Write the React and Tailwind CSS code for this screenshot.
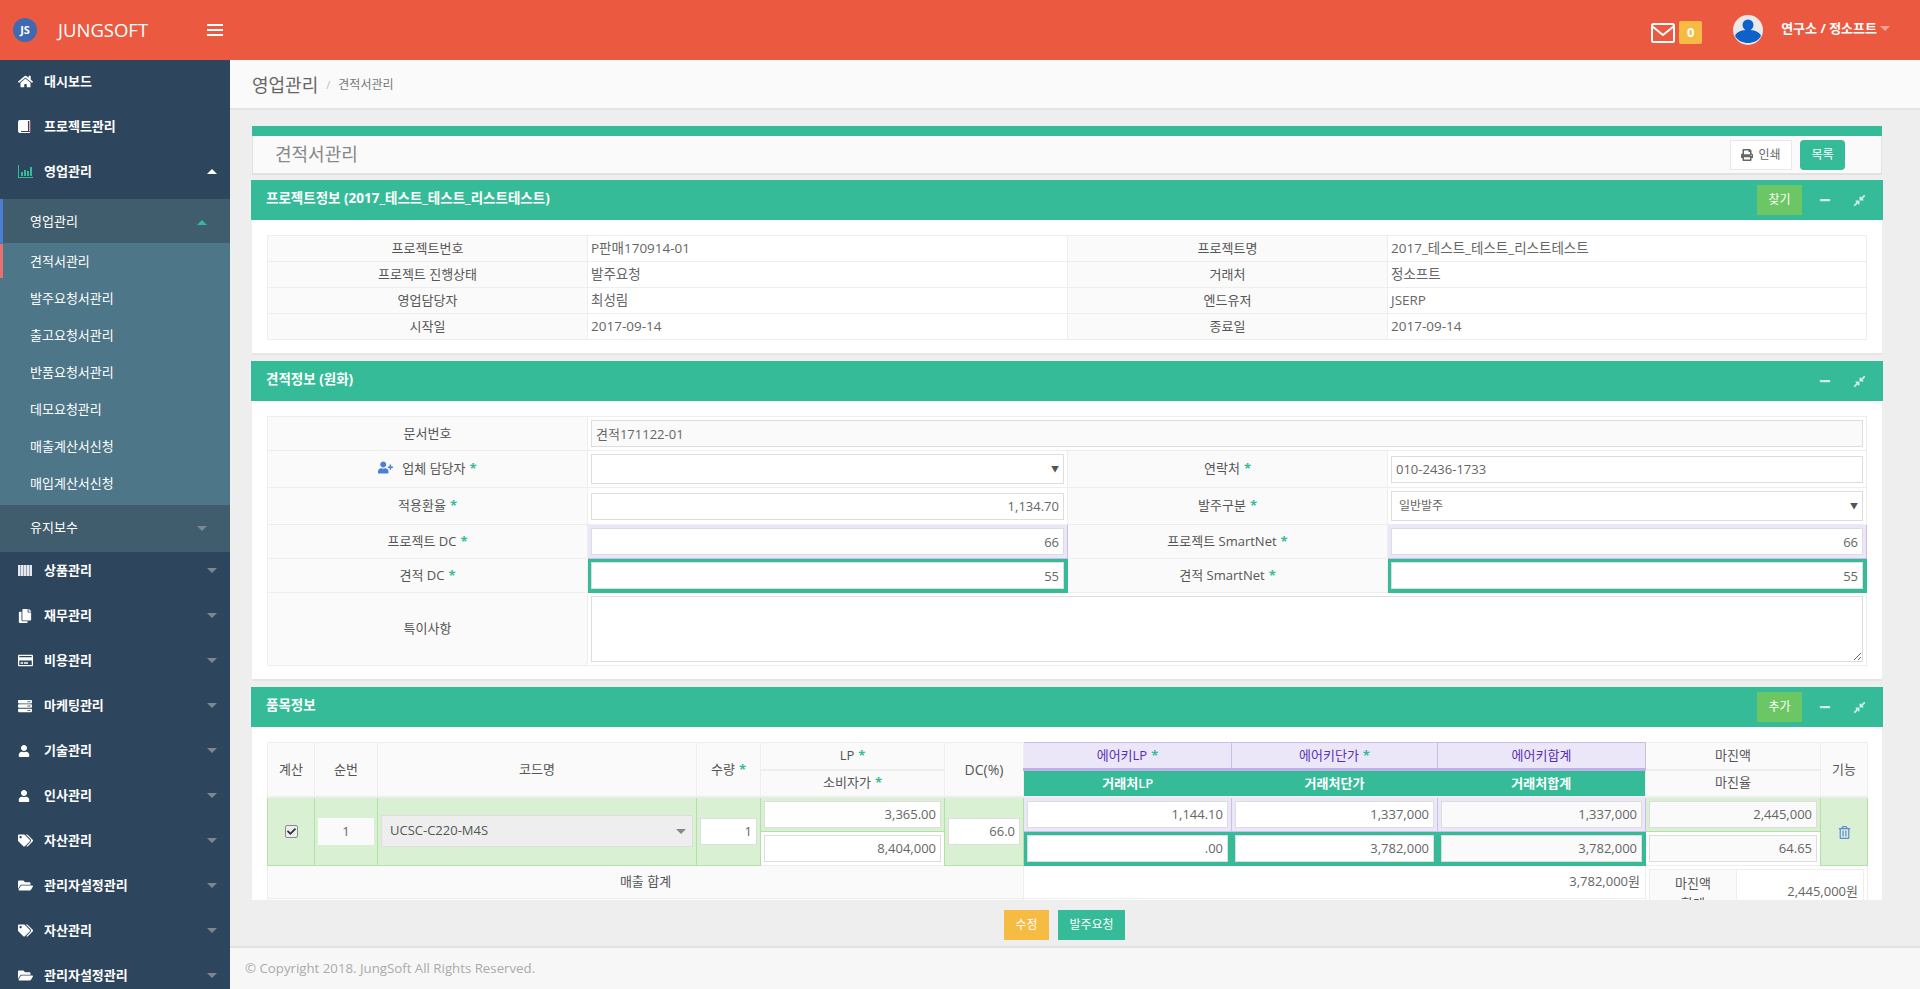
import React from 'react';
import {
  FaHome, FaCopy, FaRegCreditCard, FaServer, FaUser, FaTags, FaFolderOpen,
  FaUserPlus, FaPrint, FaMinus, FaCompressAlt, FaRegTrashAlt, FaCheck,
} from 'react-icons/fa';

const ChartIcon = () => (
  <svg width="15" height="13" viewBox="0 0 15 13" fill="#36bb98">
    <path d="M0 0h1v12h14v1H0z" />
    <path d="M3 7h2v4H3zM6 5h2v6H6zM9 6h2v5H9zM12 2h2v9h-2z" />
  </svg>
);

const BookIcon = () => (
  <svg width="13" height="13" viewBox="0 0 13 13">
    <path d="M2 0h10v11H3v1h9v1H2a2 2 0 0 1-2-2V2a2 2 0 0 1 2-2z" fill="#ffffff" />
    <path d="M10 1h1v10h-1z" fill="#2d465d" />
    <path d="M11.5 0.5h1v12h-1z" fill="#c9707c" />
  </svg>
);

const BarcodeIcon = () => (
  <svg width="14" height="11" viewBox="0 0 14 11">
    <rect width="14" height="11" fill="#e6e8ee" />
    <path d="M2 0h1v11H2zM5 0h1v11H5zM8 0h1v11H8zM11 0h1v11h-1z" fill="#9aa4b4" />
  </svg>
);

const EnvelopeIcon = () => (
  <svg width="24" height="20" viewBox="0 0 24 20" fill="none" stroke="#ffffff" strokeWidth="2">
    <rect x="1" y="1" width="22" height="18" rx="1.5" />
    <path d="M1.5 3.5 12 12l10.5-8.5" />
  </svg>
);

const Avatar = () => (
  <svg width="30" height="30" viewBox="0 0 30 30">
    <circle cx="15" cy="15" r="15" fill="#e9e9e9" />
    <circle cx="15" cy="10" r="5.5" fill="#0d62c9" />
    <path d="M2 21c2-5 7-6 13-6s11 1 13 6c-3 5-8 7-13 7S5 26 2 21z" fill="#0d62c9" />
  </svg>
);

const Caret = ({ up, color }) => (
  <span
    className={`w-0 h-0 border-x-[5px] border-x-transparent ${up ? 'border-b-[5px]' : 'border-t-[5px]'}`}
    style={up ? { borderBottomColor: color } : { borderTopColor: color }}
  />
);

const topMenu = [
  { label: '대시보드', icon: <FaHome size={15} /> },
  { label: '프로젝트관리', icon: <BookIcon /> },
];

const subMenu = ['견적서관리', '발주요청서관리', '출고요청서관리', '반품요청서관리', '데모요청관리', '매출계산서신청', '매입계산서신청'];

const bottomMenu = [
  { label: '상품관리', icon: <BarcodeIcon /> },
  { label: '재무관리', icon: <FaCopy size={14} /> },
  { label: '비용관리', icon: <FaRegCreditCard size={15} /> },
  { label: '마케팅관리', icon: <FaServer size={14} /> },
  { label: '기술관리', icon: <FaUser size={12} /> },
  { label: '인사관리', icon: <FaUser size={12} /> },
  { label: '자산관리', icon: <FaTags size={15} /> },
  { label: '관리자설정관리', icon: <FaFolderOpen size={15} /> },
  { label: '자산관리', icon: <FaTags size={15} /> },
  { label: '관리자설정관리', icon: <FaFolderOpen size={15} /> },
];

function MenuItem({ item, open }) {
  return (
    <div className="h-[45px] shrink-0 pb-[2px] pl-[18px] pr-[13px] flex items-center text-white font-bold text-[13px]">
      <span className="w-[26px] flex items-center">{item.icon}</span>
      <span className="flex-1">{item.label}</span>
      {item.caret !== false && <Caret up={open} color={open ? '#ffffff' : '#7d8791'} />}
    </div>
  );
}

function Sidebar() {
  return (
    <aside className="w-[230px] shrink-0 bg-[#2d465d] overflow-hidden flex flex-col">
      {topMenu.map((item) => (
        <MenuItem key={item.label} item={{ ...item, caret: false }} />
      ))}
      <MenuItem item={{ label: '영업관리', icon: <ChartIcon /> }} open />
      <div className="mt-[4px] h-[44px] shrink-0 bg-[#3f5d6d] border-l-[3px] border-l-[#4a7fd6] pt-[2px] pl-[27px] pr-[23px] flex items-center justify-between text-white text-[13px]">
        <span>영업관리</span>
        <Caret up color="#36bb98" />
      </div>
      <div className="bg-[#4d7689] pb-[3px] shrink-0">
        {subMenu.map((label, i) => (
          <div
            key={label}
            className={`h-[37px] flex items-center pl-[30px] text-white text-[13px] ${i === 0 ? 'relative' : ''}`}
          >
            {i === 0 && <span className="absolute left-0 top-[1px] bottom-[2px] w-[3px] bg-[#e8716f]" />}
            {label}
          </div>
        ))}
      </div>
      <div className="h-[47px] shrink-0 bg-[#3f5d6d] pb-[1px] pl-[30px] pr-[23px] flex items-center justify-between text-white text-[13px]">
        <span>유지보수</span>
        <Caret color="#7d8791" />
      </div>
      <div className="-mt-[3px] flex flex-col">
        {bottomMenu.map((item, i) => (
          <MenuItem key={i} item={item} />
        ))}
      </div>
    </aside>
  );
}

function Star() {
  return <span className="text-[#36bb98] font-bold ml-[4px]">*</span>;
}

function Field({ value = '', right, bg = 'bg-white', className = '' }) {
  return (
    <input
      readOnly
      value={value}
      className={`block w-full h-[27px] border border-[#dddddd] px-[4px] text-[13px] text-[#666] outline-none ${right ? 'text-right' : ''} ${bg} ${className}`}
    />
  );
}

function FakeSelect({ value }) {
  return (
    <div className="h-[30px] bg-white border border-[#dddddd] pl-[7px] pr-[4px] flex items-center justify-between text-[12px] text-[#666]">
      <span>{value}</span>
      <span className="text-[8px] text-[#555]">▼</span>
    </div>
  );
}

function Panel({ title, action, children, first }) {
  return (
    <section className={first ? 'mt-[5px]' : 'mt-[6px]'}>
      <div className="h-10 bg-[#36bb98] flex items-center pl-[15px] pr-[17px] text-white">
        <h2 className="flex-1 font-bold text-[13.5px] pb-[4px]">{title}</h2>
        {action && (
          <button className="h-[30px] w-[45px] bg-[#6dc664] text-[12px] text-white mr-[17px]">{action}</button>
        )}
        <FaMinus size={12} className="text-[#cfeee5]" />
        <FaCompressAlt size={13} className="text-[#cfeee5] ml-[22px]" />
      </div>
      <div className="mx-px bg-white border-b-2 border-[#e5e5e5] px-[15px] pt-[15px] pb-[13px]">{children}</div>
    </section>
  );
}

const labelCell = 'bg-[#fafafa] border border-[#eeeeee] text-center text-[13px] text-[#555] font-normal';
const valueCell = 'border border-[#eeeeee] text-[13.5px] text-[#666] px-[3px]';

function ProjectTable() {
  const rows = [
    ['프로젝트번호', 'P판매170914-01', '프로젝트명', '2017_테스트_테스트_리스트테스트'],
    ['프로젝트 진행상태', '발주요청', '거래처', '정소프트'],
    ['영업담당자', '최성림', '엔드유저', 'JSERP'],
    ['시작일', '2017-09-14', '종료일', '2017-09-14'],
  ];
  return (
    <table className="w-full table-fixed border-collapse">
      <colgroup>
        <col className="w-[320px]" />
        <col className="w-[480px]" />
        <col className="w-[320px]" />
        <col />
      </colgroup>
      <tbody>
        {rows.map((r) => (
          <tr key={r[0]} className="h-[26px]">
            <th className={labelCell}>{r[0]}</th>
            <td className={valueCell}>{r[1]}</td>
            <th className={labelCell}>{r[2]}</th>
            <td className={valueCell}>{r[3]}</td>
          </tr>
        ))}
      </tbody>
    </table>
  );
}

const purpleCell = 'bg-[#ebe7f8] border border-[#c9bfe8] p-[3px]';
const tealCell = 'bg-[#36bb98] border border-[#36bb98] p-[3px]';

function QuoteTable() {
  return (
    <table className="w-full table-fixed border-collapse">
      <colgroup>
        <col className="w-[320px]" />
        <col className="w-[480px]" />
        <col className="w-[320px]" />
        <col />
      </colgroup>
      <tbody>
        <tr className="h-[34px]">
          <th className={labelCell}>문서번호</th>
          <td colSpan={3} className={valueCell}>
            <Field value="견적171122-01" bg="bg-[#fafafa]" />
          </td>
        </tr>
        <tr className="h-[37px]">
          <th className={labelCell}>
            <FaUserPlus size={15} className="inline text-[#4a7fd6] mr-[9px] align-[-2px]" />
            업체 담당자<Star />
          </th>
          <td className={valueCell}>
            <FakeSelect value="" />
          </td>
          <th className={labelCell}>
            연락처<Star />
          </th>
          <td className={valueCell}>
            <Field value="010-2436-1733" />
          </td>
        </tr>
        <tr className="h-[37px]">
          <th className={labelCell}>
            적용환율<Star />
          </th>
          <td className={valueCell}>
            <Field value="1,134.70" right />
          </td>
          <th className={labelCell}>
            발주구분<Star />
          </th>
          <td className={valueCell}>
            <FakeSelect value="일반발주" />
          </td>
        </tr>
        <tr className="h-[34px]">
          <th className={labelCell}>
            프로젝트 DC<Star />
          </th>
          <td className={purpleCell}>
            <Field value="66" right />
          </td>
          <th className={labelCell}>
            프로젝트 SmartNet<Star />
          </th>
          <td className={purpleCell}>
            <Field value="66" right />
          </td>
        </tr>
        <tr className="h-[34px]">
          <th className={labelCell}>
            견적 DC<Star />
          </th>
          <td className={tealCell}>
            <Field value="55" right />
          </td>
          <th className={labelCell}>
            견적 SmartNet<Star />
          </th>
          <td className={tealCell}>
            <Field value="55" right />
          </td>
        </tr>
        <tr className="h-[73px]">
          <th className={labelCell}>특이사항</th>
          <td colSpan={3} className={valueCell}>
            <textarea readOnly className="block w-full h-[66px] border border-[#dddddd] outline-none" />
          </td>
        </tr>
      </tbody>
    </table>
  );
}

const purpleHead = 'bg-[#ebe7f8] border border-[#c9bfe8] border-b-[3px] border-b-[#c0b0e8] text-center text-[13px] text-[#5a2fb5] font-normal';
const tealHead = 'bg-[#36bb98] border-y border-[#36bb98] text-center text-[13px] text-white font-semibold';
const greenCell = 'bg-[#d9f0d3] border border-[#b3dfa9] px-[3px]';
const whiteCell = 'bg-white border border-[#eeeeee] border-t-[#b3dfa9] border-b-[#eeeeee] px-[3px]';

function ItemTable() {
  return (
    <table className="w-[1600px] table-fixed border-collapse">
      <colgroup>
        <col className="w-[47px]" />
        <col className="w-[63px]" />
        <col className="w-[319px]" />
        <col className="w-[64px]" />
        <col className="w-[184px]" />
        <col className="w-[79px]" />
        <col className="w-[208px]" />
        <col className="w-[206px]" />
        <col className="w-[208px]" />
        <col className="w-[175px]" />
        <col className="w-[47px]" />
      </colgroup>
      <thead>
        <tr className="h-[27px]">
          <th rowSpan={2} className={labelCell}>계산</th>
          <th rowSpan={2} className={labelCell}>순번</th>
          <th rowSpan={2} className={labelCell}>코드명</th>
          <th rowSpan={2} className={labelCell}>
            수량<Star />
          </th>
          <th className={`${labelCell} border-b-2`}>
            LP<Star />
          </th>
          <th rowSpan={2} className={`${labelCell} text-[14px]`}>DC(%)</th>
          <th className={purpleHead}>
            에어키LP<Star />
          </th>
          <th className={purpleHead}>
            에어키단가<Star />
          </th>
          <th className={purpleHead}>에어키합계</th>
          <th className={`${labelCell} border-b-2`}>마진액</th>
          <th rowSpan={2} className={labelCell}>기능</th>
        </tr>
        <tr className="h-[27px] border-b-2 border-b-[#eeeeee]">
          <th className={labelCell}>
            소비자가<Star />
          </th>
          <th className={tealHead}>거래처LP</th>
          <th className={tealHead}>거래처단가</th>
          <th className={tealHead}>거래처합계</th>
          <th className={labelCell}>마진율</th>
        </tr>
      </thead>
      <tbody>
        <tr className="h-[34px]">
          <td rowSpan={2} className={`${greenCell} text-center`}>
            <span className="inline-flex w-[13px] h-[13px] mb-[3px] items-center justify-center align-middle bg-[#eeeeee] border border-[#8a8a8a] rounded-[2px] text-[#333]">
              <FaCheck size={9} />
            </span>
          </td>
          <td rowSpan={2} className={greenCell}>
            <input readOnly value="1" className="block w-full h-[27px] bg-[#fafafa] text-center text-[13px] text-[#666] outline-none" />
          </td>
          <td rowSpan={2} className={greenCell}>
            <div className="h-[32px] bg-[#eeeeee] border border-[#dddddd] pl-[8px] pr-[6px] flex items-center justify-between text-[13px] text-[#555]">
              <span>UCSC-C220-M4S</span>
              <Caret color="#888888" />
            </div>
          </td>
          <td rowSpan={2} className={greenCell}>
            <Field value="1" right />
          </td>
          <td className={greenCell}>
            <Field value="3,365.00" right />
          </td>
          <td rowSpan={2} className={greenCell}>
            <Field value="66.0" right />
          </td>
          <td className={purpleCell}>
            <Field value="1,144.10" right />
          </td>
          <td className={purpleCell}>
            <Field value="1,337,000" right />
          </td>
          <td className={purpleCell}>
            <Field value="1,337,000" right bg="bg-[#fafafa]" />
          </td>
          <td className={greenCell}>
            <Field value="2,445,000" right bg="bg-[#fafafa]" />
          </td>
          <td rowSpan={2} className={`${greenCell} text-center`}>
            <FaRegTrashAlt size={13} className="inline text-[#5a8ad8]" />
          </td>
        </tr>
        <tr className="h-[34px]">
          <td className={whiteCell}>
            <Field value="8,404,000" right />
          </td>
          <td className={tealCell}>
            <Field value=".00" right />
          </td>
          <td className={tealCell}>
            <Field value="3,782,000" right />
          </td>
          <td className={tealCell}>
            <Field value="3,782,000" right bg="bg-[#fafafa]" />
          </td>
          <td className={whiteCell}>
            <Field value="64.65" right bg="bg-[#fafafa]" />
          </td>
        </tr>
        <tr className="h-[33px]">
          <th colSpan={6} className={labelCell}>매출 합계</th>
          <td colSpan={3} className="border border-[#eeeeee] text-right text-[13px] text-[#666] px-[5px]">3,782,000원</td>
          <td colSpan={2} rowSpan={2} className="border border-[#eeeeee] p-[3px] align-top">
            <div className="flex border border-[#eeeeee] h-[46px]">
              <div className="w-[87px] bg-[#fafafa] border-r border-[#eeeeee] text-center text-[13px] text-[#555] leading-[20px] py-[3px] px-[20px]">
                마진액 합계
              </div>
              <div className="flex-1 flex items-center justify-end px-[5px] text-[13px] text-[#666]">2,445,000원</div>
            </div>
          </td>
        </tr>
        <tr className="h-[33px]">
          <th colSpan={6} className={labelCell} />
          <td colSpan={3} className="border border-[#eeeeee]" />
        </tr>
      </tbody>
    </table>
  );
}

export default function App() {
  return (
    <div className="h-screen flex flex-col overflow-hidden bg-[#eeeeee] font-['Open_Sans','Noto_Sans_CJK_KR',sans-serif]">
      <header className="h-[60px] shrink-0 bg-[#eb5a40] flex items-center text-white">
        <div className="ml-[13px] w-[24px] h-[24px] rounded-full bg-[#3f6ab1] flex items-center justify-center text-[11px] font-bold">JS</div>
        <div className="ml-[21px] w-[149px] text-[18.5px]">JUNGSOFT</div>
        <div className="flex flex-col gap-[3px]">
          <span className="block w-[16px] h-[2px] bg-white" />
          <span className="block w-[16px] h-[2px] bg-white" />
          <span className="block w-[16px] h-[2px] bg-white" />
        </div>
        <div className="flex-1" />
        <span className="mt-[6px]">
          <EnvelopeIcon />
        </span>
        <span className="mt-[5px] ml-[4px] w-[23px] h-[23px] rounded-[2px] bg-[#f6bb42] flex items-center justify-center text-[13px] font-bold">0</span>
        <span className="ml-[31px]">
          <Avatar />
        </span>
        <span className="ml-[18px] text-[13px] font-bold mb-[3px]">연구소 / 정소프트</span>
        <span className="ml-[3px] mr-[30px] mb-[3px] flex">
          <Caret color="#f3a393" />
        </span>
      </header>

      <div className="flex-1 min-h-0 flex">
        <Sidebar />
        <main className="flex-1 min-w-0 flex flex-col">
          <div className="h-[50px] shrink-0 bg-[#fafafa] border-b-2 border-[#e4e4e4] pl-[22px] pt-[2px] flex items-center gap-[8px]">
            <h1 className="text-[18px] text-[#666]">영업관리</h1>
            <span className="text-[11px] text-[#bbb]">/</span>
            <span className="text-[12px] text-[#777]">견적서관리</span>
          </div>

          <div className="flex-1 min-h-0 overflow-hidden pl-[21px] pr-[37px] pt-[16px]">
            <div className="mx-px border-t-[10px] border-[#36bb98]">
              <div className="h-[39px] bg-[#fafafa] border-b-2 border-x border-[#e2e2e2] pl-[22px] pr-[36px] flex items-center justify-between">
                <span className="text-[18px] text-[#888]">견적서관리</span>
                <div className="flex gap-[8px]">
                  <button className="h-[30px] w-[62px] bg-white border border-[#e8e8e8] text-[12px] text-[#666] flex items-center justify-center gap-[5px]">
                    <FaPrint size={12} />
                    인쇄
                  </button>
                  <button className="h-[30px] w-[45px] bg-[#36bb98] rounded-[4px] text-[12px] text-white">목록</button>
                </div>
              </div>
            </div>
            <Panel first title="프로젝트정보 (2017_테스트_테스트_리스트테스트)" action="찾기">
              <ProjectTable />
            </Panel>
            <Panel title="견적정보 (원화)">
              <QuoteTable />
            </Panel>
            <Panel title="품목정보" action="추가">
              <ItemTable />
            </Panel>
          </div>

          <div className="h-[46px] shrink-0 pt-[10px] pr-[21px] flex justify-center gap-[9px]">
            <button className="h-[30px] w-[45px] bg-[#f6bb42] text-white text-[12px]">수정</button>
            <button className="h-[30px] w-[67px] bg-[#36bb98] text-white text-[12px]">발주요청</button>
          </div>
          <footer className="h-[43px] shrink-0 bg-[#f7f7f7] border-t-2 border-[#e2e2e2] pl-[15px] flex items-center text-[13.25px] text-[#aaa]">
            © Copyright 2018. JungSoft All Rights Reserved.
          </footer>
        </main>
      </div>
    </div>
  );
}
